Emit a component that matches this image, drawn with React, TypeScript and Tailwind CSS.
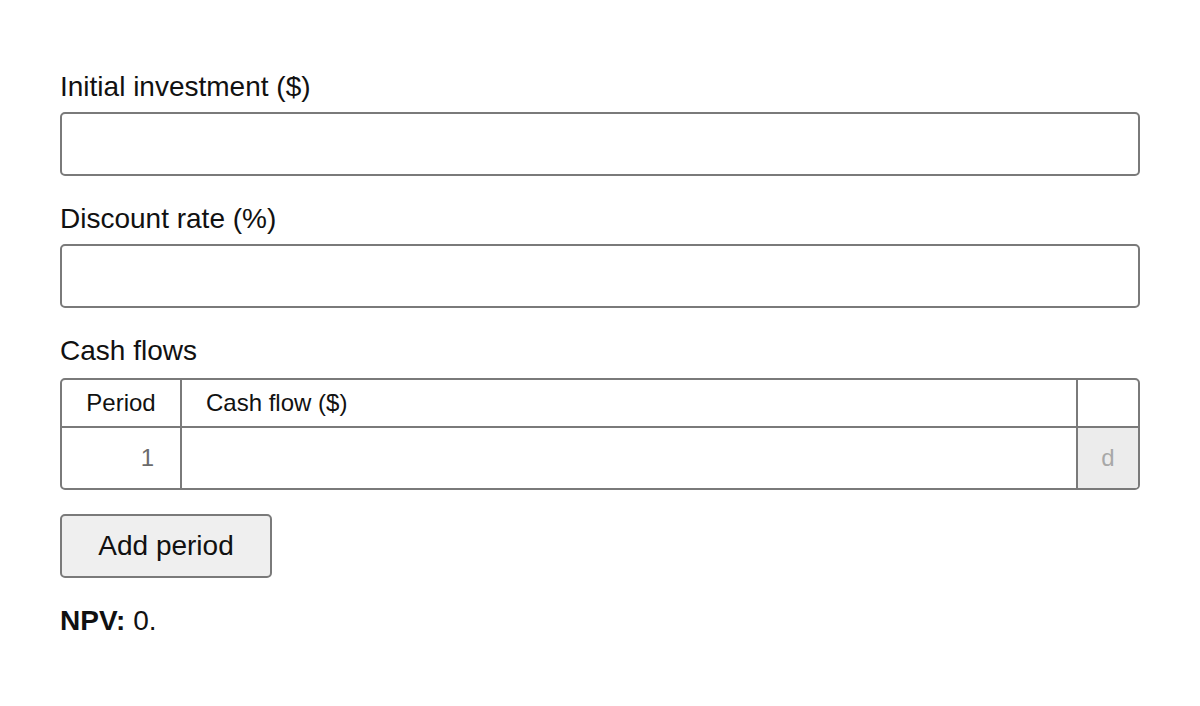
import { useState } from "react";

type Row = { id: number; amount: string };

export default function App() {
  const [initial, setInitial] = useState("");
  const [rate, setRate] = useState("");
  const [rows, setRows] = useState<Row[]>([{ id: 1, amount: "" }]);

  const addPeriod = () =>
    setRows((r) => [...r, { id: r.length + 1, amount: "" }]);

  const npv = (() => {
    const r = parseFloat(rate) / 100 || 0;
    let total = -(parseFloat(initial) || 0);
    rows.forEach((row, i) => {
      total += (parseFloat(row.amount) || 0) / Math.pow(1 + r, i + 1);
    });
    return total;
  })();

  const inputCls =
    "block w-full h-[64px] border-2 border-[#7a7a7a] rounded-[5px] bg-white px-3 text-[28px] outline-none";

  return (
    <div className="min-h-screen bg-white px-[60px] pt-[71px] font-['Liberation_Sans',Arial,sans-serif] text-[#111]">
      {/* Initial investment */}
      <label className="block text-[28px] leading-[32px] mb-[9px]">
        Initial investment ($)
      </label>
      <input
        className={inputCls}
        value={initial}
        onChange={(e) => setInitial(e.target.value)}
      />

      {/* Discount rate */}
      <label className="block text-[28px] leading-[32px] mt-[27px] mb-[9px]">
        Discount rate (%)
      </label>
      <input
        className={inputCls}
        value={rate}
        onChange={(e) => setRate(e.target.value)}
      />

      {/* Cash flow table */}
      <div className="text-[28px] leading-[32px] mt-[27px] mb-[11px]">
        Cash flows
      </div>
      <div className="border-2 border-[#7a7a7a] rounded-[5px] overflow-hidden">
        <div className="grid grid-cols-[120px_1fr_60px] h-[46px] text-[24px] items-stretch">
          <div className="flex items-center justify-center border-r-2 border-[#7a7a7a]">
            Period
          </div>
          <div className="flex items-center pl-[24px] border-r-2 border-[#7a7a7a]">
            Cash flow ($)
          </div>
          <div />
        </div>
        {rows.map((row, i) => (
          <div
            key={row.id}
            className="grid grid-cols-[120px_1fr_60px] h-[62px] border-t-2 border-[#7a7a7a] text-[24px]"
          >
            <div className="flex items-center justify-end pr-[26px] border-r-2 border-[#7a7a7a] text-[#6b6b6b]">
              {row.id}
            </div>
            <input
              className="h-full w-full px-3 border-r-2 border-[#7a7a7a] outline-none text-[24px]"
              value={row.amount}
              onChange={(e) =>
                setRows((rs) =>
                  rs.map((x, j) =>
                    j === i ? { ...x, amount: e.target.value } : x
                  )
                )
              }
            />
            <button className="flex items-center justify-center bg-[#ececec] text-[#a8a8a8] text-[24px]">
              d
            </button>
          </div>
        ))}
      </div>

      <button
        onClick={addPeriod}
        className="mt-[24px] w-[212px] h-[64px] border-2 border-[#7a7a7a] rounded-[5px] bg-[#efefef] text-[28px]"
      >
        Add period
      </button>

      <p className="mt-[27px] text-[28px] leading-[32px]">
        <b>NPV:</b> {npv === 0 ? "0." : npv.toFixed(2)}
      </p>
    </div>
  );
}
